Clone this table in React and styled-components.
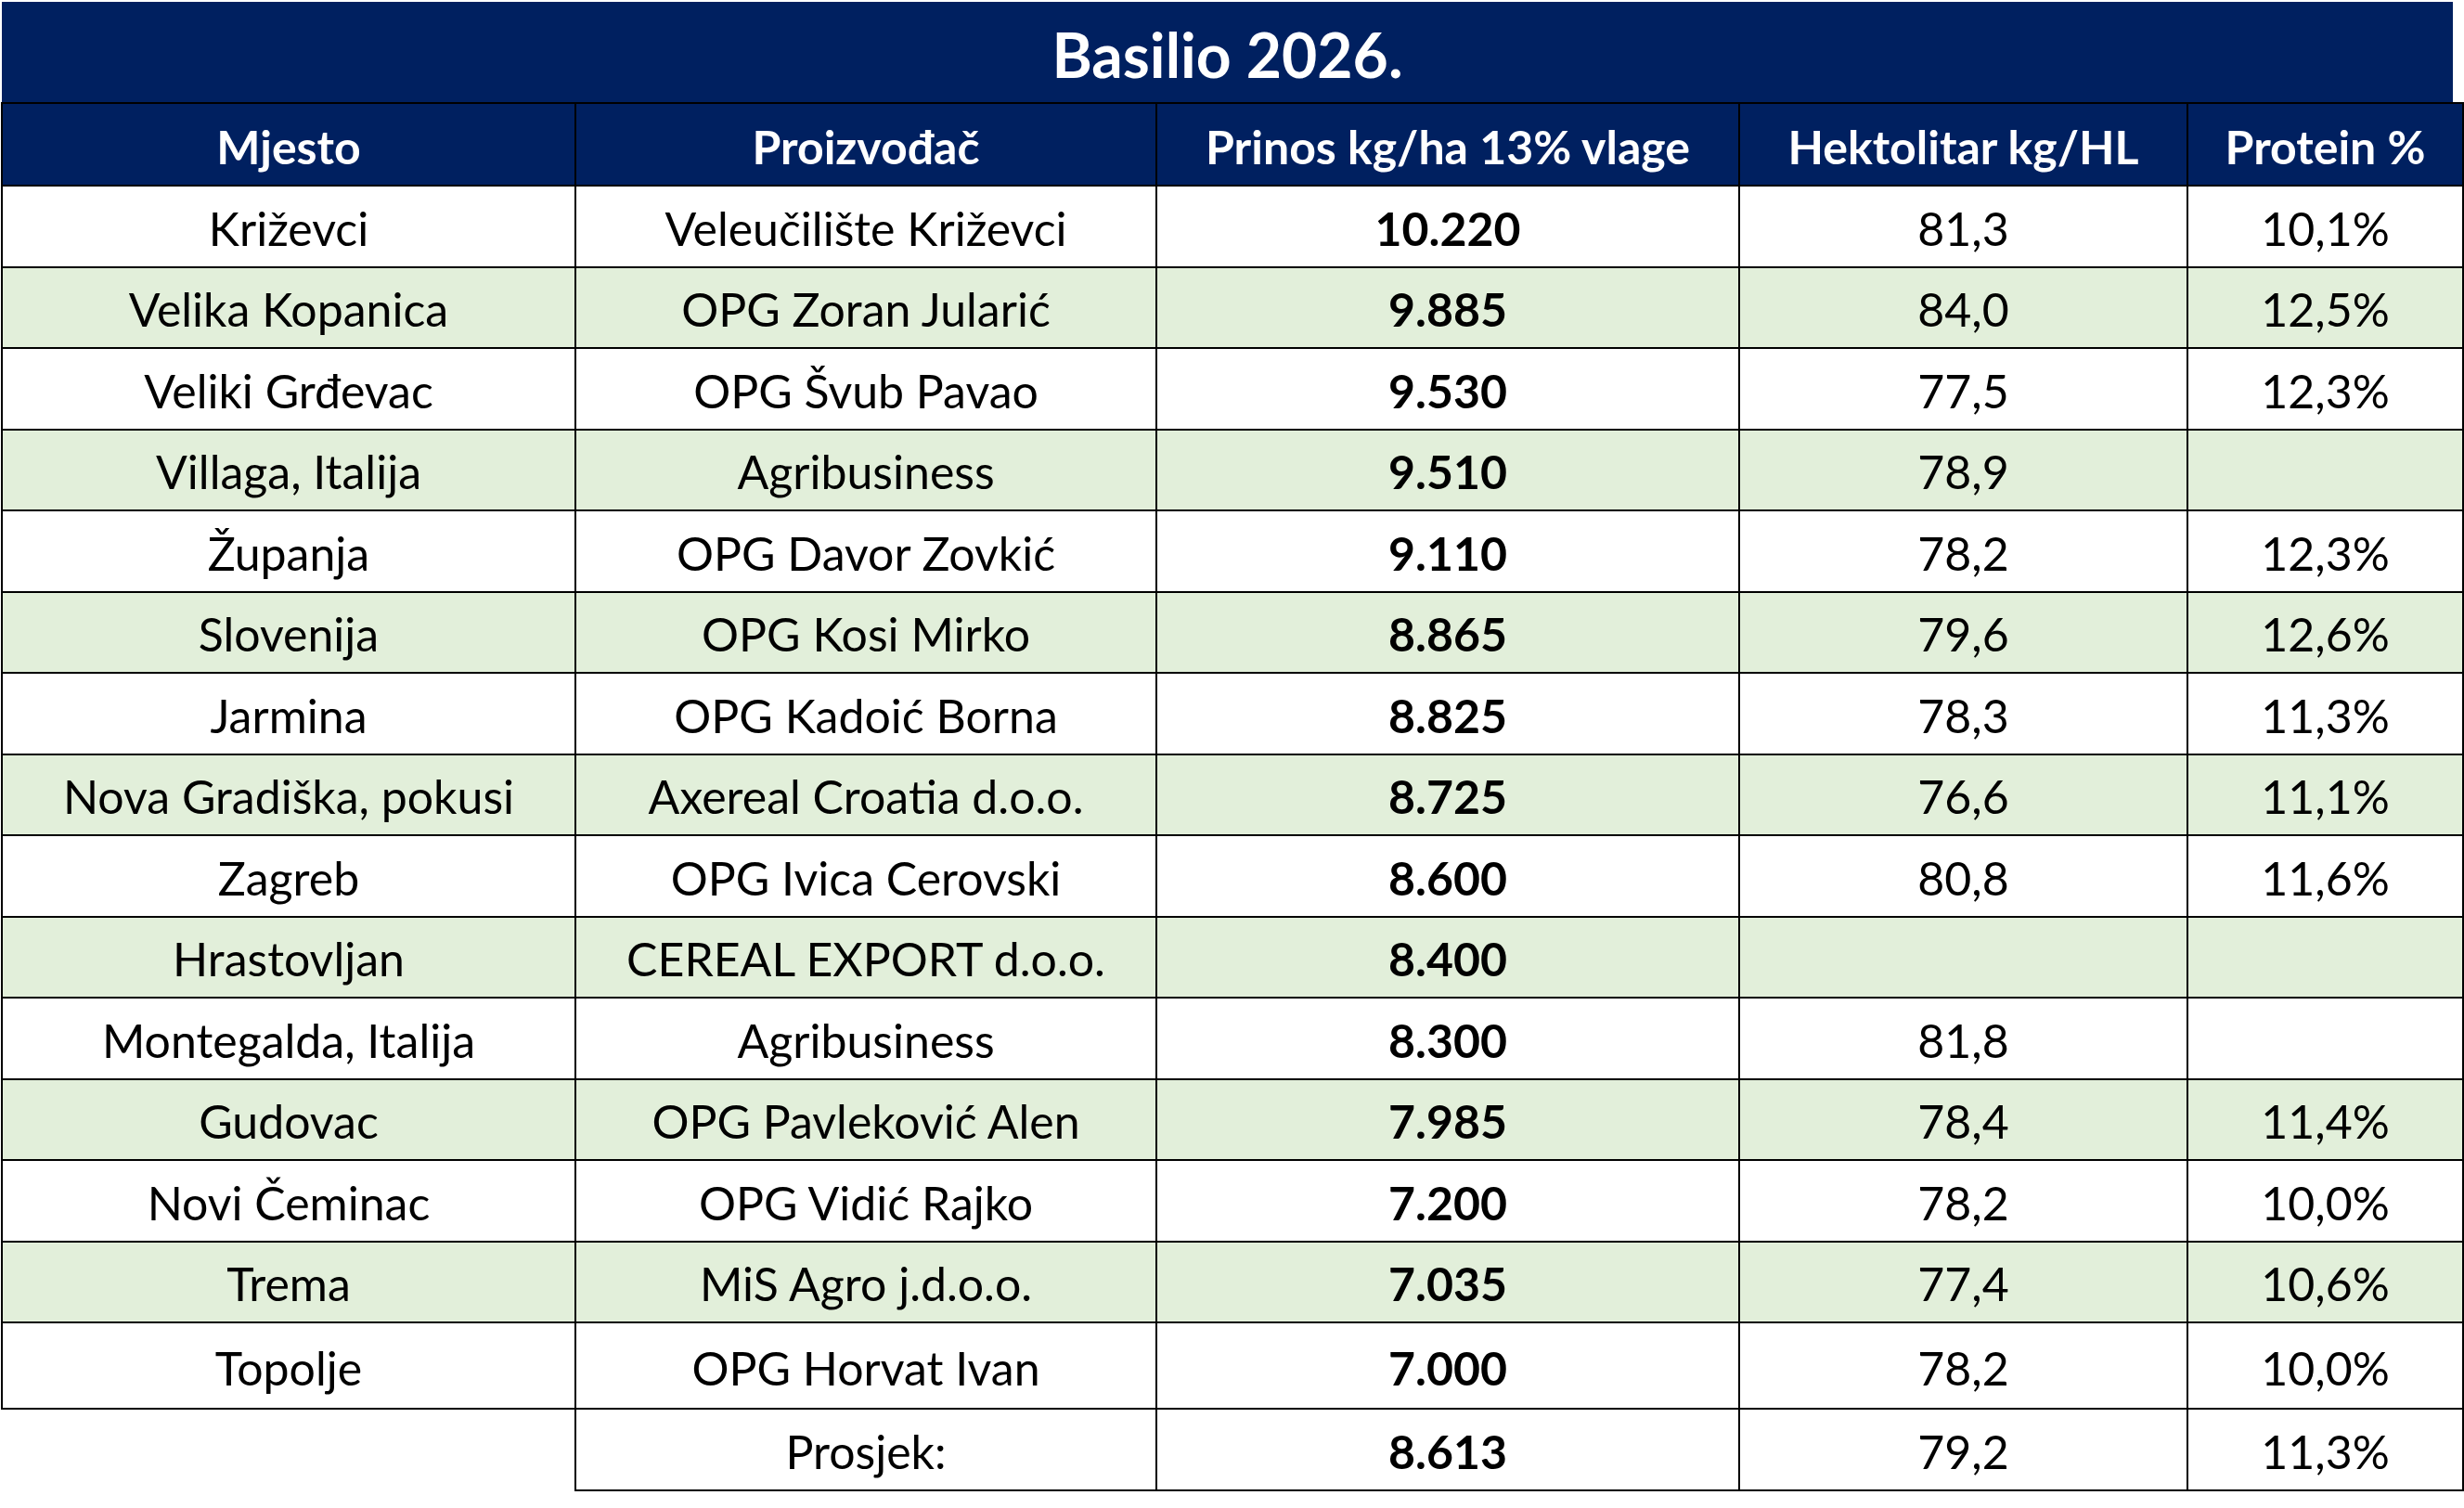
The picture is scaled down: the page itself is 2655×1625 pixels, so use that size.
import React from 'react'
import styled, { createGlobalStyle } from "styled-components";

const GlobalStyle = createGlobalStyle`
  html, body {
    margin: 0;
    padding: 0;
    background: #ffffff;
  }
  body {
    font-family: Lato, "Open Sans", "Liberation Sans", sans-serif;
    color: #000;
  }
`

const rows = [
  ["Križevci", "Veleučilište Križevci", "10.220", "81,3", "10,1%"],
  ["Velika Kopanica", "OPG Zoran Jularić", "9.885", "84,0", "12,5%"],
  ["Veliki Grđevac", "OPG Švub Pavao", "9.530", "77,5", "12,3%"],
  ["Villaga, Italija", "Agribusiness", "9.510", "78,9", ""],
  ["Županja", "OPG Davor Zovkić", "9.110", "78,2", "12,3%"],
  ["Slovenija", "OPG Kosi Mirko", "8.865", "79,6", "12,6%"],
  ["Jarmina", "OPG Kadoić Borna", "8.825", "78,3", "11,3%"],
  ["Nova Gradiška, pokusi", "Axereal Croatia d.o.o.", "8.725", "76,6", "11,1%"],
  ["Zagreb", "OPG Ivica Cerovski", "8.600", "80,8", "11,6%"],
  ["Hrastovljan", "CEREAL EXPORT d.o.o.", "8.400", "", ""],
  ["Montegalda, Italija", "Agribusiness", "8.300", "81,8", ""],
  ["Gudovac", "OPG Pavleković Alen", "7.985", "78,4", "11,4%"],
  ["Novi Čeminac", "OPG Vidić Rajko", "7.200", "78,2", "10,0%"],
  ["Trema", "MiS Agro j.d.o.o.", "7.035", "77,4", "10,6%"],
  ["Topolje", "OPG Horvat Ivan", "7.000", "78,2", "10,0%"],
];

function App() {
  return (<>
    <GlobalStyle />
    <Page>
      <Title>Basilio 2026.</Title>
      <Table>
        <colgroup>
          <col style={{width: "618px"}} />
          <col style={{width: "626px"}} />
          <col style={{width: "628px"}} />
          <col style={{width: "483px"}} />
          <col style={{width: "297px"}} />
        </colgroup>
        <thead>
          <HeadRow>
            <Th>Mjesto</Th>
            <Th>Proizvođač</Th>
            <Th>Prinos kg/ha 13% vlage</Th>
            <Th>Hektolitar kg/HL</Th>
            <Th>Protein %</Th>
          </HeadRow>
        </thead>
        <tbody>
          {rows.map((r, key) => (
            <Row key={key} $green={key % 2 === 1} $tall={key === rows.length - 1}>
              <Td>{r[0]}</Td>
              <Td>{r[1]}</Td>
              <Td $bold>{r[2]}</Td>
              <Td>{r[3]}</Td>
              <Td>{r[4]}</Td>
            </Row>
          ))}
          <Row $last>
            <Blank></Blank>
            <Td>Prosjek:</Td>
            <Td $bold>8.613</Td>
            <Td>79,2</Td>
            <Td>11,3%</Td>
          </Row>
        </tbody>
      </Table>
    </Page>
  </>
  )
}

export default App;


const Page = styled.div`
  padding-top: 2px;
  width: 2655px;
`

const Title = styled.div`
  margin-left: 2px;
  width: 2641px;
  height: 108px;
  background-color: #002060;
  color: #ffffff;
  font-weight: 700;
  font-size: 66px;
  display: flex;
  align-items: center;
  justify-content: center;
  padding-top: 4px;
  box-sizing: border-box;
`

const Table = styled.table`
  border-collapse: collapse;
  table-layout: fixed;
  width: 2653px;
  margin-left: 1px;
`

const HeadRow = styled.tr`
  height: 89px;
  background-color: #002060;
`

const Th = styled.th`
  padding: 4px 0 0;
  color: #ffffff;
  font-weight: 700;
  font-size: 50px;
  text-align: center;
  border: 2px solid #000;
  white-space: nowrap;
`

const Row = styled.tr`
  height: ${p => p.$last ? "88px" : p.$tall ? "93px" : "87.5px"};
  background-color: ${p => p.$green ? "#e2efda" : "#ffffff"};
`

const Td = styled.td`
  padding: 4px 0 0;
  font-size: 50px;
  font-weight: ${p => p.$bold ? 700 : 400};
  text-align: center;
  border: 2px solid #000;
  white-space: nowrap;
`

const Blank = styled.td`
  border-left: hidden;
  border-bottom: hidden;
`
